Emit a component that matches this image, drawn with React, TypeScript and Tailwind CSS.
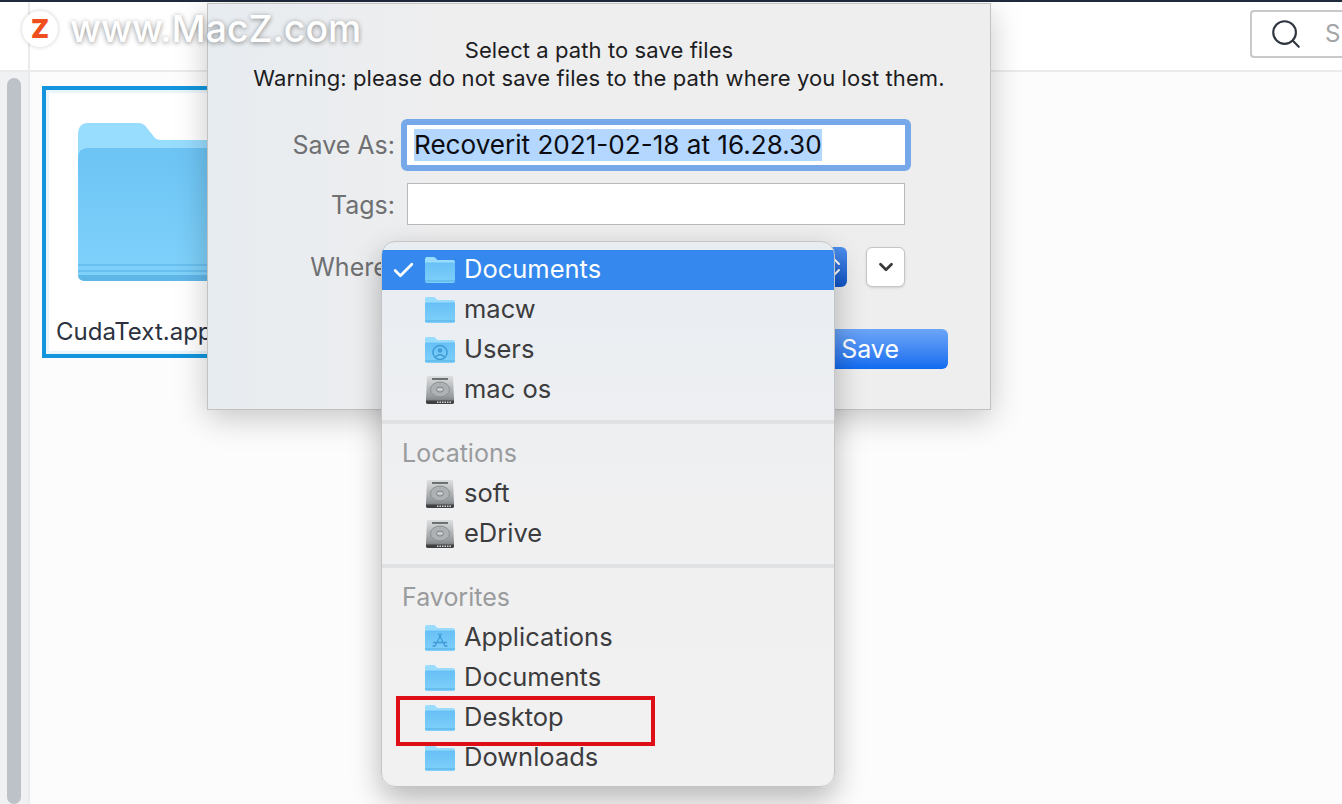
import { Check, ChevronDown, ChevronsUpDown, Search } from "lucide-react";

const font = { fontFamily: "Inter, 'Liberation Sans', sans-serif" };

type Kind = "folder" | "user" | "apps" | "disk";

function SmallFolder({ kind, id }: { kind: Kind; id: string }) {
  if (kind === "disk") {
    return (
      <svg width="30" height="30" viewBox="0 0 30 30">
        <defs>
          <linearGradient id={id} x1="0" y1="0" x2="0" y2="1">
            <stop offset="0" stopColor="#dcdedf" />
            <stop offset="0.75" stopColor="#95999b" />
            <stop offset="1" stopColor="#6a6d6f" />
          </linearGradient>
        </defs>
        <path d="M3 1h24q1 0 1 1.500L29 24v3q0 2-2 2H3q-2 0-2-2v-3L2 2.500Q2 1 3 1z" fill={`url(#${id})`} />
        <rect x="7" y="3" width="16" height="2" fill="#6d7072" />
        <ellipse cx="15" cy="14.500" rx="9.500" ry="7.500" fill="#adb1b3" stroke="#8b8f91" />
        <ellipse cx="15" cy="14.500" rx="3.500" ry="2.500" fill="#c8cbcc" stroke="#7a7e80" />
        <path d="M1 25.500h28V27q0 2-2 2H3q-2 0-2-2z" fill="#3e4042" />
        <path d="M12 27.200h14" stroke="#d8d8d8" strokeWidth="1.600" strokeDasharray="1.500 1" />
      </svg>
    );
  }
  return (
    <svg width="30" height="30" viewBox="0 0 30 30">
      <defs>
        <linearGradient id={id} x1="0" y1="0" x2="0" y2="1">
          <stop offset="0" stopColor="#67c0f5" />
          <stop offset="1" stopColor="#7fd0fb" />
        </linearGradient>
      </defs>
      <path d="M0 4q0-2 2-2h7q1 0 2 1.500l1.500 1.500H28q2 0 2 2v3H0z" fill="#9adcfd" />
      <path d="M0 8.500q0-1 1-1h28q1 0 1 1V26q0 2-2 2H2q-2 0-2-2z" fill={`url(#${id})`} />
      <path d="M0 26h30" stroke="#55aee2" strokeWidth="1" />
      {kind === "user" && (
        <g fill="none" stroke="#3f9bd6" strokeWidth="1.500">
          <circle cx="15" cy="17.500" r="7" />
          <circle cx="15" cy="15.500" r="2.200" fill="#3f9bd6" stroke="none" />
          <path d="M10.500 22q4.500-4.500 9 0" />
        </g>
      )}
      {kind === "apps" && (
        <g fill="none" stroke="#3f9bd6" strokeWidth="1.300">
          <path d="M16.500 10.500 10 23M13.500 10.500 20 23M8 19.500h14M7.500 23h3M19.500 23h3" />
        </g>
      )}
    </svg>
  );
}

function MenuRow({ label, kind, id, selected }: { label: string; kind: Kind; id: string; selected?: boolean }) {
  return (
    <div className={`flex h-10 items-center text-[25.500px] ${selected ? "bg-[#3488ee] text-white" : "text-[#3c3c3e]"}`}>
      <div className="flex w-[43px] justify-center">
        {selected && <Check className="h-[25px] w-[25px] text-white" strokeWidth={2.6} />}
      </div>
      <SmallFolder kind={kind} id={id} />
      <span className="-mt-[2px] ml-[9px] leading-none">{label}</span>
    </div>
  );
}

function SectionTitle({ label }: { label: string }) {
  return <div className="flex h-10 items-center pl-[20px] text-[25px] text-[#9a9b9d]">{label}</div>;
}

function Divider() {
  return <div className="my-[10px] h-[4px] bg-[#e0e1e2]" />;
}

function LocationMenu() {
  return (
    <div className="absolute left-[381px] top-[241px] h-[546px] w-[454px] overflow-hidden rounded-[14px] border border-[#c4c5c6] bg-gradient-to-b from-[#e8edf2] via-[#f0f0f1] to-[#f1f1f1] pt-[8px] shadow-[0_12px_30px_rgba(0,0,0,0.28)]">
      <MenuRow label="Documents" kind="folder" id="m1" selected />
      <MenuRow label="macw" kind="folder" id="m2" />
      <MenuRow label="Users" kind="user" id="m3" />
      <MenuRow label="mac os" kind="disk" id="m4" />
      <Divider />
      <SectionTitle label="Locations" />
      <MenuRow label="soft" kind="disk" id="m5" />
      <MenuRow label="eDrive" kind="disk" id="m6" />
      <Divider />
      <SectionTitle label="Favorites" />
      <MenuRow label="Applications" kind="apps" id="m7" />
      <MenuRow label="Documents" kind="folder" id="m8" />
      <MenuRow label="Desktop" kind="folder" id="m9" />
      <MenuRow label="Downloads" kind="folder" id="m10" />
    </div>
  );
}

function SaveDialog() {
  return (
    <div className="absolute left-[207px] top-[3px] h-[407px] w-[784px] border border-[#c2c2c2] bg-gradient-to-r from-[#e7ecf0] via-[#eeeeef] via-30% to-[#eeeeee] shadow-[0_8px_30px_rgba(0,0,0,0.22)]">
      <div className="pt-[32px] text-center text-[22px] leading-[28px] tracking-[0.09px] text-[#1d1d1f]">
        <div>Select a path to save files</div>
        <div>Warning: please do not save files to the path where you lost them.</div>
      </div>
      <div className="mt-[27px] flex h-[52px] items-center">
        <div className="w-[187px] pt-[2px] text-right text-[25px] text-[#6f7072]">Save As:</div>
        <div className="ml-[6px] flex h-[52px] w-[510px] items-center rounded-[6px] border-[6px] border-[#77a9ea] bg-white pl-[7px] text-[26.100px] text-[#0c0c10]">
          <span className="bg-[#b3d7ff] leading-[32px]">Recoverit 2021-02-18 at 16.28.30</span>
        </div>
      </div>
      <div className="mt-[11px] flex h-[44px] items-center">
        <div className="w-[187px] pt-[4px] text-right text-[25px] text-[#6f7072]">Tags:</div>
        <div className="ml-[12px] h-[42px] w-[498px] border border-[#b9b9b9] bg-white" />
      </div>
      <div className="mt-[21px] flex h-[40px] items-center">
        <div className="w-[187px] pt-[2px] text-right text-[25px] text-[#6f7072]">Where:</div>
        <div className="ml-[12px] flex h-[40px] w-[440px] items-center justify-end rounded-[6px] bg-gradient-to-b from-[#4d90f0] to-[#0f55c9] pr-[1px]">
          <ChevronsUpDown className="h-[24px] w-[24px] text-white" strokeWidth={2} />
        </div>
        <div className="ml-[19px] flex h-[40px] w-[39px] items-center justify-center rounded-[6px] border border-[#c4c4c4] bg-white shadow-sm">
          <ChevronDown className="h-[22px] w-[22px] text-[#3a3a3c]" strokeWidth={3} />
        </div>
      </div>
      <div className="mt-[42px] flex justify-end pr-[42px]">
        <div className="flex h-[40px] w-[200px] items-center justify-end rounded-[6px] bg-gradient-to-b from-[#6ca5f7] to-[#0f6bf0] pr-[49px] pt-[2px] text-[25px] text-white">
          Save
        </div>
      </div>
    </div>
  );
}

export default function App() {
  return (
    <div className="relative h-[804px] w-[1342px] overflow-hidden bg-white" style={font}>
      <div className="h-[2px] bg-[#1f2a3d]" />
      <header className="flex h-[70px] border-b-2 border-[#ebebeb]">
        <div className="w-[30px] border-r-2 border-[#ebebeb]" />
        <div className="flex flex-1 items-start justify-end pt-[8px]">
          <div className="flex h-[48px] w-[92px] items-center rounded-l-[4px] border-y-2 border-l-2 border-[#c9c9c9] pl-[17px]">
            <Search className="h-[34px] w-[34px] text-[#2f3640]" strokeWidth={1.5} />
            <span className="ml-[22px] text-[24px] text-[#a3a5a8]">S</span>
          </div>
        </div>
      </header>
      <div className="flex h-[732px]">
        <div className="w-[30px] border-r-2 border-[#ebebeb] bg-[#f0f1f2] pl-[7px] pt-[6px]">
          <div className="h-full w-[14px] rounded-full bg-[#bcc2c8]" />
        </div>
        <main className="flex-1 bg-[#fcfcfc] pl-[12px] pt-[14px]">
          <div className="h-[272px] w-[300px] border-[4px] border-[#1295dc] bg-white">
            <div className="h-full border-[3px] border-[#eaf5fb] pl-[29px] pt-[30px]">
              <svg width="180" height="160" viewBox="0 0 180 160">
                <defs>
                  <linearGradient id="big" x1="0" y1="0" x2="0" y2="1">
                    <stop offset="0" stopColor="#6cc4f4" />
                    <stop offset="1" stopColor="#80d2fb" />
                  </linearGradient>
                </defs>
                <path d="M0 12Q0 0 10 0h50q6 0 9 5l8 10q2 2 8 2h95v130H0z" fill="#98dcfe" />
                <path d="M0 35q0-10 10-10h170v133H8q-8 0-8-8z" fill="url(#big)" />
                <path d="M0 142h180M0 148h180" stroke="#69bfee" strokeWidth="2" />
                <path d="M0 152q0 6 8 6h172v-6z" fill="#5fb7e8" />
              </svg>
              <div className="-ml-[22px] mt-[31px] text-[24px] text-[#2c3240]">CudaText.app</div>
            </div>
          </div>
        </main>
      </div>

      <SaveDialog />
      <LocationMenu />

      {/* Red highlight around Desktop */}
      <div className="absolute left-[396px] top-[696px] h-[50px] w-[259px] border-[4px] border-[#de0f17]" />

      {/* Watermark */}
      <div className="absolute left-[22px] top-[10px] flex items-center">
        <div className="flex h-[36px] w-[36px] items-center justify-center rounded-full bg-white text-[26px] font-black leading-none text-[#ee4f1c] shadow-[0_0_4px_rgba(0,0,0,0.2)]">
          Z
        </div>
        <span className="ml-[12px] text-[37.400px] font-medium leading-none text-white [text-shadow:0_1px_5px_rgba(0,0,0,0.45)]">
          www.MacZ.com
        </span>
      </div>
    </div>
  );
}
